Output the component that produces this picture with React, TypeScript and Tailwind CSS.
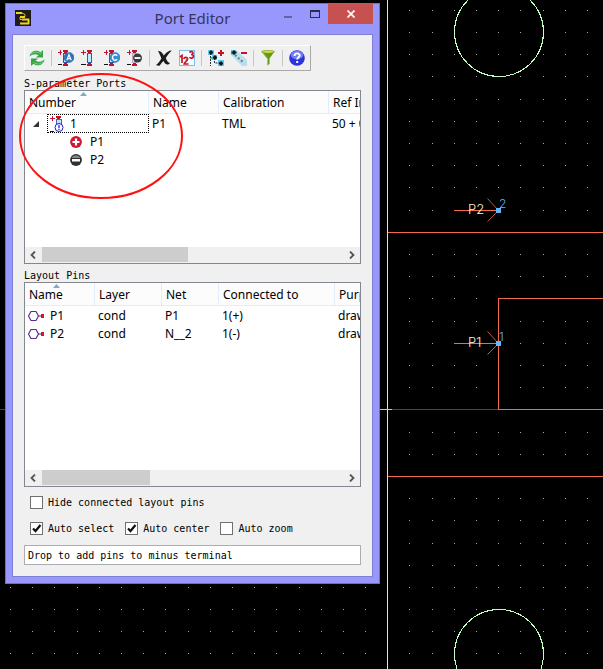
import React from 'react';

const dotColumns = [10, 32, 54, 77, 99, 121, 143, 165, 188, 210, 232, 254, 276, 299, 321, 343, 365, 387, 409, 432, 454, 476, 498, 520, 543, 565, 587];
const dotRows = [10, 32, 54, 76, 99, 121, 143, 165, 187, 210, 232, 254, 276, 298, 321, 343, 365, 387, 409, 432, 454, 476, 498, 520, 543, 565, 587, 609, 631, 653];

function PortPin({ y, name, index }: { y: number; name: string; index: string }) {
  return (
    <g>
      <path d={`M454 ${y + 0.5}H498`} stroke="#f26a4f" />
      <path d={`M487.5 ${y - 11.5}l11 12l-11 11`} stroke="#f26a4f" fill="none" strokeWidth="0.8" />
      <text x="468" y={y + 4} fill="#fff3dc" className="font-['Inter'] text-[13px] font-light">{name}</text>
      <text x="499" y={y - 2} fill="#63b8ff" className="font-['Inter'] text-[12px] font-light">{index}</text>
      <rect x="496" y={y - 2} width="5" height="5" fill="#63b8ff" />
    </g>
  );
}

function LayoutCanvas() {
  return (
    <svg className="absolute inset-0 h-full w-full" aria-label="Layout canvas">
      <g fill="#a9a9a9" shapeRendering="crispEdges">
        {dotRows.map((y) => dotColumns.filter((x) => x > 388 || y > 583).map((x) => <rect key={`${x}-${y}`} x={x} y={y} width="1" height="1" />))}
      </g>
      <g shapeRendering="crispEdges" fill="none">
        <line x1="0" x2="498" y1="409.5" y2="409.5" stroke="#2f4f4f" />
        <line x1="387.5" x2="387.5" y1="0" y2="100%" stroke="#ffff00" />
        <line x1="380" x2="392" y1="409.5" y2="409.5" stroke="#c8c8c8" />
        <line x1="388" x2="100%" y1="232.5" y2="232.5" stroke="#f26a4f" />
        <line x1="388" x2="100%" y1="476.5" y2="476.5" stroke="#f26a4f" />
        <line x1="498" x2="100%" y1="298.5" y2="298.5" stroke="#f26a4f" />
        <line x1="498" x2="100%" y1="409.5" y2="409.5" stroke="#f26a4f" />
        <line x1="498.5" x2="498.5" y1="298" y2="410" stroke="#f26a4f" />
        <circle cx="499" cy="32" r="44.5" stroke="#c1ffc1" />
        <circle cx="499" cy="654" r="44.5" stroke="#c1ffc1" />
      </g>
      <PortPin y={210} name="P2" index="2" />
      <PortPin y={343} name="P1" index="1" />
    </svg>
  );
}

function Svg16({ children }: { children: React.ReactNode }) {
  return <svg viewBox="0 0 16 16" className="block size-4 shrink-0" aria-hidden="true">{children}</svg>;
}

function AppLogo() {
  return (
    <Svg16>
      <rect width="16" height="16" fill="#1d1b1c" />
      <path d="M1 3h6M5 7h5M7 9.500h6.500v4H5" fill="none" stroke="#f5d21f" strokeWidth="2" strokeLinejoin="round" />
      <path d="M7 3l3 1.500v2M5 7v2.500h3" fill="none" stroke="#e8b800" strokeWidth="1" />
    </Svg16>
  );
}

function RefreshIcon() {
  return (
    <Svg16>
      <path d="M0.500 6.500C1.500 1 7 -1 11.500 2.200L14 0v7.500H7L9.500 5.200C7 3.500 3.500 4 0.500 6.500z" fill="#35a648" />
      <path d="M15.500 9.500C14.500 15 9 17 4.500 13.800L2 16V8.500h7L6.500 10.800C9 12.500 12.500 12 15.500 9.500z" fill="#35a648" />
      <path d="M2 4C5 1.500 8 1.500 11.500 3.800L13 2.500M14 12C11 14.500 8 14.500 4.500 12.200" fill="none" stroke="#7fd07f" strokeWidth="1" />
    </Svg16>
  );
}

function PortBase({ faded = false }: { faded?: boolean }) {
  const red = '#c0132c';
  return (
    <g shapeRendering="crispEdges">
      <path d="M0 2.500h4M2.500 0v5" stroke={red} strokeWidth="1.500" />
      <path d="M0 14.500h4" stroke="#111" />
      <rect x="5.500" y="3.500" width="4" height="9" fill={faded ? '#e7dff0' : '#cdeeff'} stroke={faded ? '#b9a9c9' : '#3c4fa8'} />
      <path d="M5 0h5v2H9v1H6V2H5zM6 13h3v1h1v2H5v-2h1z" fill={red} />
    </g>
  );
}

function PortAutoIcon() {
  return (
    <Svg16>
      <PortBase />
      <circle cx="11" cy="7.500" r="5" fill="#2c76bd" stroke="#1e5c9c" strokeWidth="0.500" />
      <path d="M8.800 10.200L11 4.700l2.200 5.500M9.500 8.700h3" fill="none" stroke="#fff" strokeWidth="1.200" />
    </Svg16>
  );
}

function PortIcon() {
  return (
    <Svg16>
      <g shapeRendering="crispEdges">
        <path d="M0 2.500h5M2.500 0v5" stroke="#c0132c" />
        <path d="M0 14.500h5" stroke="#111" />
        <rect x="6.500" y="3.500" width="4" height="9" fill="#bdeaff" stroke="#3458b0" />
        <path d="M6 0h5v2h-1v1H7V2H6zM7 13h3v1h1v2H6v-2h1z" fill="#c0132c" />
      </g>
    </Svg16>
  );
}

function PortCalIcon() {
  return (
    <Svg16>
      <PortBase />
      <circle cx="11" cy="7.500" r="5" fill="#378fd0" stroke="#1e6cac" strokeWidth="0.500" />
      <path d="M13.200 5.700a2.700 2.700 0 1 0 0 3.600" fill="none" stroke="#fff" strokeWidth="1.400" />
    </Svg16>
  );
}

function PortRemoveIcon() {
  return (
    <Svg16>
      <PortBase faded />
      <circle cx="10.500" cy="8" r="4.500" fill="#3c3c3c" />
      <rect x="7.500" y="7" width="6" height="2" fill="#eee" />
    </Svg16>
  );
}

function DeleteIcon() {
  return (
    <Svg16>
      <path d="M2 1C5 0.500 6.500 3 7.800 5.500C10 2.500 12.500 0.500 15.800 0.500C13.500 3 11.500 5 9.800 8C11 11 12 12.500 14 13C12 15.500 9.500 15 7.400 11C5.800 12.500 4.800 14 3.800 15.500C2 16 0 15.500 0.300 14.800C2.500 13 3.800 11 5.400 8.500C4.200 5.500 3.200 3 2 1z" fill="#1c1c1c" />
    </Svg16>
  );
}

function NumbersIcon() {
  return (
    <Svg16>
      <rect x="0.500" y="0.500" width="15" height="15" fill="#f4fbff" stroke="#7cbfe4" />
      <g fill="none" stroke="#c81424" strokeWidth="1.700">
        <path d="M1 7L3 5.500V13" />
        <path d="M5 9c0-2.500 4-2 3.500 0C8.200 11 5.500 12 5.200 14H9.500" />
        <path d="M10.500 2.500c1-1.500 3.800-1 3.500 0.800c-0.200 1-1 1.200-2 1.200c1.500 0 2.500 0.500 2.500 1.800c0 2-3 2.400-4 0.800" />
      </g>
    </Svg16>
  );
}

function TreeAddIcon() {
  return (
    <Svg16>
      <path d="M0 0h6v5H0zM4 5h5v5H4zM10 10h6v6h-6z" fill="#5ec9ee" />
      <path d="M2.500 3v13M2.500 8h4M6.500 8v5h6" fill="none" stroke="#26343c" strokeDasharray="2 1" />
      <path d="M1 2.500h4M3 0.500v4M5 7.500h4M7 5.500v4M11 13.500h4M13 11.500v4" stroke="#10161a" strokeWidth="2" />
      <path d="M10 3h6M13 0v6" stroke="#c0132c" strokeWidth="2" />
    </Svg16>
  );
}

function TreeRemoveIcon() {
  return (
    <Svg16>
      <path d="M0 0h5l11 10v6h-5L0 5z" fill="#b9dfec" />
      <path d="M0 0h5v5H0z" fill="#55c9ee" />
      <path d="M4 5l9 8" stroke="#66808a" strokeWidth="2" strokeDasharray="2 2" />
      <path d="M0.500 2.500h5M3 0.500v4" stroke="#10161a" strokeWidth="2" />
      <path d="M10 3h6" stroke="#c0132c" strokeWidth="2" />
    </Svg16>
  );
}

function FilterIcon() {
  return (
    <Svg16>
      <path d="M1.500 1.500h13L9.500 8.500v5.500L7 15.500V8.500z" fill="#5d9a1c" />
      <path d="M3 2.500l5 6v6l-1 1v-7l-5.500-7z" fill="#a4d048" />
      <ellipse cx="8" cy="1.800" rx="6.500" ry="1.500" fill="#d8d83c" stroke="#6f9420" strokeWidth="0.600" />
    </Svg16>
  );
}

function HelpIcon() {
  return (
    <Svg16>
      <circle cx="8" cy="8" r="7.800" fill="#2b33dc" />
      <ellipse cx="8" cy="5" rx="6.300" ry="4.300" fill="#6f7cf4" />
      <path d="M5.500 6c0-3.500 5.200-3.200 5.200-0.500c0 1.800-2.500 1.900-2.500 4" fill="none" stroke="#fff" strokeWidth="1.900" />
      <rect x="7.200" y="11" width="2" height="2" fill="#fff" />
    </Svg16>
  );
}

function PortRowIcon() {
  return (
    <Svg16>
      <g shapeRendering="crispEdges">
        <path d="M0 2.500h5M2.500 0v5" stroke="#c0132c" />
        <path d="M0 15.500h4" stroke="#111" />
        <path d="M6 0h5v2h-1v1H7V2H6z" fill="#c0132c" />
        <rect x="6.500" y="3.500" width="5" height="8" fill="#bfe4fa" stroke="#5a5ab0" />
      </g>
      <circle cx="9" cy="11.500" r="4" fill="#fff" stroke="#1616d8" />
      <path d="M9 9v3.200M9 13v1" stroke="#1616d8" strokeWidth="1.200" />
    </Svg16>
  );
}

function PlusIcon() {
  return (
    <svg viewBox="0 0 12 12" className="block size-3" aria-hidden="true">
      <circle cx="6" cy="6" r="5.900" fill="#cf1730" />
      <path d="M2.500 6h7M6 2.500v7" stroke="#fff" strokeWidth="2.200" />
    </svg>
  );
}

function MinusIcon() {
  return (
    <svg viewBox="0 0 12 12" className="block size-3" aria-hidden="true">
      <circle cx="6" cy="6" r="5.900" fill="#303030" />
      <path d="M1.500 4a5 5 0 0 1 9 0z" fill="#888" />
      <rect x="2" y="5" width="8" height="2.500" fill="#fff" />
    </svg>
  );
}

function PinIcon() {
  return (
    <svg viewBox="0 0 16 12" className="block h-3 w-4 shrink-0" aria-hidden="true">
      <path d="M0.500 6L3 1.500h5L10.500 6L8 10.500H3z" fill="#fff" stroke="#5b2a8c" strokeWidth="1.200" />
      <path d="M10.500 6H14" stroke="#5b2a8c" />
      <rect x="13" y="4" width="3" height="4" fill="#d81428" />
    </svg>
  );
}

type Tool = { label: string; icon: React.ReactNode };
const toolGroups: Tool[][] = [
  [{ label: 'Refresh', icon: <RefreshIcon /> }],
  [
    { label: 'Create ports automatically', icon: <PortAutoIcon /> },
    { label: 'New port', icon: <PortIcon /> },
    { label: 'Calibration', icon: <PortCalIcon /> },
    { label: 'Remove terminal', icon: <PortRemoveIcon /> },
  ],
  [{ label: 'Delete', icon: <DeleteIcon /> }, { label: 'Renumber', icon: <NumbersIcon /> }],
  [{ label: 'Expand all', icon: <TreeAddIcon /> }, { label: 'Collapse all', icon: <TreeRemoveIcon /> }],
  [{ label: 'Filter', icon: <FilterIcon /> }],
  [{ label: 'Help', icon: <HelpIcon /> }],
];

function Toolbar() {
  return (
    <div role="toolbar" className="flex h-[26px] items-center self-start border border-t-white border-r-[#a9a9a9] border-b-[#a9a9a9] border-l-white pr-[5px] pl-1">
      {toolGroups.map((group, i) => (
        <React.Fragment key={i}>
          {i > 0 && <span className="mx-[6px] h-4 w-px bg-[#c6c6c6]" />}
          <div className="flex gap-[7px]">
            {group.map((tool) => (
              <button key={tool.label} type="button" aria-label={tool.label}>{tool.icon}</button>
            ))}
          </div>
        </React.Fragment>
      ))}
    </div>
  );
}

function Header({ labels }: { labels: string[] }) {
  return (
    <thead>
      <tr className="h-[23px]">
        {labels.map((label, i) => (
          <th key={label} scope="col" className="relative border-r border-b border-[#e3ecfa] bg-[#fcfcfd] p-0 pt-[2px] pl-1 text-left font-normal">
            {label}
            {i === 0 && <span className="absolute inset-x-0 top-px mr-[6px] flex justify-center"><span className="h-[4px] w-[7px] bg-[#7fa9c4] [clip-path:polygon(50%_0,100%_100%,0_100%)]" /></span>}
          </th>
        ))}
      </tr>
    </thead>
  );
}

function ScrollBar({ thumb }: { thumb: string }) {
  return (
    <div className="flex h-4 bg-[#f0f0f0]">
      <button type="button" aria-label="Scroll left" className="flex w-[17px] items-center justify-center pr-[2px]">
        <svg viewBox="0 0 6 8" className="h-2 w-[6px]"><path d="M5 0.500L1.500 4L5 7.500" fill="none" stroke="#555" strokeWidth="1.800" /></svg>
      </button>
      <div className="flex-1"><div className={`h-[15px] bg-[#cdcdcd] ${thumb}`} /></div>
      <button type="button" aria-label="Scroll right" className="flex w-[17px] items-center justify-center">
        <svg viewBox="0 0 6 8" className="h-2 w-[6px]"><path d="M1 0.500L4.500 4L1 7.500" fill="none" stroke="#555" strokeWidth="1.800" /></svg>
      </button>
    </div>
  );
}

const panel = "flex flex-col border border-[#828790] bg-white font-['Noto_Sans',sans-serif] text-[12px] leading-[18px] text-black";
const table = 'w-[430px] table-fixed border-separate border-spacing-0';

function PortsTable() {
  return (
    <div className={`${panel} h-[174px]`}>
      <div className="flex-1 overflow-hidden">
        <table className={table} aria-label="S-parameter Ports">
          <colgroup><col className="w-[124px]" /><col className="w-[70px]" /><col className="w-[110px]" /><col /></colgroup>
          <Header labels={['Number', 'Name', 'Calibration', 'Ref Impedance']} />
          <tbody>
            <tr>
              <td className="p-0">
                <div className="flex items-center pl-2">
                  <svg viewBox="0 0 6 6" className="size-[6px]" aria-hidden="true"><path d="M6 0v6H0z" fill="#333" /></svg>
                  <span className="ml-2 flex h-[19px] flex-1 items-center gap-1 border border-dotted border-black pl-[2px]"><PortRowIcon />1</span>
                </div>
              </td>
              <td className="p-0 pl-[3px]">P1</td>
              <td className="p-0 pl-[3px]">TML</td>
              <td className="p-0 pl-[3px]">50 + 0j</td>
            </tr>
            <tr><td className="p-0"><div className="flex items-center gap-2 pl-[45px]"><PlusIcon />P1</div></td></tr>
            <tr><td className="p-0"><div className="flex items-center gap-2 pl-[45px]"><MinusIcon />P2</div></td></tr>
          </tbody>
        </table>
      </div>
      <ScrollBar thumb="w-[146px]" />
    </div>
  );
}

const pins = [
  ['P1', 'cond', 'P1', '1(+)', 'drawing'],
  ['P2', 'cond', 'N__2', '1(-)', 'drawing'],
];

function PinsTable() {
  return (
    <div className={`${panel} h-[205px]`}>
      <div className="flex-1 overflow-hidden">
        <table className={table} aria-label="Layout Pins">
          <colgroup><col className="w-[70px]" /><col className="w-[67px]" /><col className="w-[57px]" /><col className="w-[116px]" /><col /></colgroup>
          <Header labels={['Name', 'Layer', 'Net', 'Connected to', 'Purpose']} />
          <tbody>
            <tr className="h-px"><td className="p-0" /></tr>
            {pins.map(([name, ...rest]) => (
              <tr key={name}>
                <td className="p-0"><div className="flex items-center gap-[6px] pl-[3px]"><PinIcon />{name}</div></td>
                {rest.map((value, i) => <td key={i} className="p-0 pl-[3px]">{value}</td>)}
              </tr>
            ))}
          </tbody>
        </table>
      </div>
      <ScrollBar thumb="w-[108px]" />
    </div>
  );
}

function CheckBox({ label, checked = false }: { label: string; checked?: boolean }) {
  return (
    <label className="flex items-center gap-[5px]">
      <span className="relative flex size-[13px]">
        <input type="checkbox" defaultChecked={checked} className="peer size-[13px] appearance-none border border-[#707070] bg-white" />
        <svg viewBox="0 0 13 13" className="pointer-events-none absolute inset-0 hidden peer-checked:block" aria-hidden="true">
          <path d="M3 6.500L5.500 9L10.500 3" fill="none" stroke="#111" strokeWidth="2.200" />
        </svg>
      </span>
      {label}
    </label>
  );
}

function PortEditor() {
  return (
    <section aria-label="Port Editor" className="relative w-[375px] border border-[#6f6fc4] bg-[#9797fc] font-['DejaVu_Sans_Mono',monospace] text-[10px] leading-[13px] text-black">
      <header className="grid h-[30px] grid-cols-[1fr_auto_1fr] items-start pl-[9px] pr-[6px]">
        <div className="pt-[6px]"><AppLogo /></div>
        <h1 className="pr-[3px] font-['Noto_Sans',sans-serif] text-[15px] leading-[28px] text-[#35355c]">Port Editor</h1>
        <div className="flex justify-end">
          <button type="button" aria-label="Minimize" className="flex h-5 w-[27px] items-center justify-center"><span className="mt-[6px] h-[2px] w-2 bg-[#6262a8]" /></button>
          <button type="button" aria-label="Maximize" className="flex h-5 w-[27px] items-center justify-center"><span className="h-2 w-[10px] border border-t-2 border-[#2c2c4c]" /></button>
          <button type="button" aria-label="Close" className="flex h-5 w-[45px] items-center justify-center bg-[#c75050]">
            <svg viewBox="0 0 8 8" className="size-2"><path d="M0.500 0.500l7 7M7.500 0.500l-7 7" stroke="#fff" strokeWidth="1.700" /></svg>
          </button>
        </div>
      </header>
      <div className="mx-[6px] mb-[6px] flex flex-col border border-[#7f7fd4] bg-[#f0f0f0] px-[11px] pt-[10px] pb-[11px]">
        <Toolbar />
        <h2 className="mt-[6px]">S-parameter Ports</h2>
        <PortsTable />
        <h2 className="mt-[5px]">Layout Pins</h2>
        <PinsTable />
        <div className="mt-[9px] flex flex-col gap-[13px] pl-[6px]">
          <CheckBox label="Hide connected layout pins" />
          <div className="flex gap-[11px]">
            <CheckBox label="Auto select" checked />
            <CheckBox label="Auto center" checked />
            <CheckBox label="Auto zoom" />
          </div>
        </div>
        <input type="text" aria-label="Status" readOnly value="Drop to add pins to minus terminal" className="mt-[10px] h-5 w-full border border-[#abadb3] bg-white px-[3px]" />
      </div>
      <svg className="pointer-events-none absolute top-[68px] left-[12px] h-[130px] w-[168px]" aria-hidden="true">
        <ellipse cx="83" cy="64" rx="81" ry="62" fill="none" stroke="#ff1010" strokeWidth="2" />
      </svg>
    </section>
  );
}

export default function App() {
  return (
    <main className="relative min-h-screen overflow-hidden bg-black pt-[3px] pl-[5px]">
      <LayoutCanvas />
      <PortEditor />
    </main>
  );
}
